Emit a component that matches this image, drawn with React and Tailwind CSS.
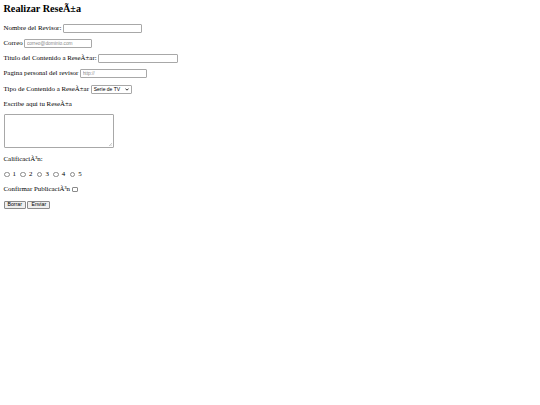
import React from "react";

const serif = "font-['Liberation_Serif',serif]";
const sans = "font-['Liberation_Sans',Arial,sans-serif]";

// Text field with a thin grey frame, scaled-down browser look
const Field = ({ width, placeholder }) => (
  <input
    type="text"
    placeholder={placeholder}
    className={`${width} h-[9px] border border-[#a8a8a8] rounded-[1px] bg-white px-[1.5px] ${sans} text-[4.8px] text-black placeholder:text-[#8a8a8a] outline-none`}
  />
);

const Radio = ({ value }) => (
  <label className="flex items-center gap-[3px]">
    <input
      type="radio"
      name="calificacion"
      value={value}
      className="appearance-none w-[5.5px] h-[5.5px] rounded-full border border-[#8a8a8a] bg-white m-0"
    />
    <span>{value}</span>
  </label>
);

const Button = ({ children }) => (
  <button
    className={`h-[8.5px] px-[3px] flex items-center border border-[#8a8a8a] rounded-[1px] bg-[#efefef] ${sans} text-[5.2px] text-black leading-none`}
  >
    {children}
  </button>
);

export default function App() {
  return (
    <div className={`bg-white w-[540px] h-[405px] pl-[3.5px] ${serif} text-[6.9px] text-black leading-none`}>
      {/* Title */}
      <h2 className="mt-[3px] h-[12px] flex items-center text-[10.2px] font-bold">
        Realizar ReseÃ±a
      </h2>

      <form className="mt-[8.5px] flex flex-col gap-[6.3px]">
        <div className="h-[9px] flex items-center gap-[1.8px]">
          <span>Nombre del Revisor:</span>
          <Field width="w-[79px]" />
        </div>

        <div className="h-[9px] flex items-center gap-[1.8px]">
          <span>Correo</span>
          <Field width="w-[68px]" placeholder="correo@dominio.com" />
        </div>

        <div className="h-[9px] flex items-center gap-[1.8px]">
          <span>Titulo del Contenido a ReseÃ±ar:</span>
          <Field width="w-[80px]" />
        </div>

        <div className="h-[9px] flex items-center gap-[1.8px]">
          <span>Pagina personal del revisor</span>
          <Field width="w-[67px]" placeholder="http://" />
        </div>

        <div className="h-[9px] flex items-center gap-[1.8px]">
          <span>Tipo de Contenido a ReseÃ±ar</span>
          <div className={`w-[41px] h-[9px] flex items-center justify-between border border-[#a8a8a8] rounded-[1px] bg-white pl-[2px] pr-[1.5px] ${sans} text-[5px]`}>
            <span>Serie de TV</span>
            <svg width="4" height="3" viewBox="0 0 4 3">
              <path d="M0.5 0.6 L2 2.2 L3.5 0.6" fill="none" stroke="#000" strokeWidth="0.8" />
            </svg>
          </div>
        </div>

        <div className="h-[9px] flex items-center">
          <span>Escribe aqui tu ReseÃ±a</span>
        </div>

        <div className="-mt-[1px] relative w-[110px] h-[34px] border border-[#a8a8a8] rounded-[1px] bg-white">
          <svg className="absolute right-[1px] bottom-[1px]" width="3" height="3" viewBox="0 0 3 3">
            <path d="M3 0 L0 3 M3 1.5 L1.5 3" stroke="#9a9a9a" strokeWidth="0.5" />
          </svg>
        </div>

        <div className="h-[9px] flex items-center">
          <span>CalificaciÃ³n:</span>
        </div>

        <div className="h-[9px] flex items-center gap-[4.5px] pl-[0.5px]">
          <Radio value="1" />
          <Radio value="2" />
          <Radio value="3" />
          <Radio value="4" />
          <Radio value="5" />
        </div>

        <div className="h-[9px] flex items-center gap-[2px]">
          <span>Confirmar PublicaciÃ³n</span>
          <input
            type="checkbox"
            className="appearance-none w-[5.5px] h-[5.5px] border border-[#8a8a8a] rounded-[1px] bg-white m-0"
          />
        </div>

        <div className="h-[9px] flex items-center gap-[1.5px]">
          <Button>Borrar</Button>
          <Button>Enviar</Button>
        </div>
      </form>
    </div>
  );
}
